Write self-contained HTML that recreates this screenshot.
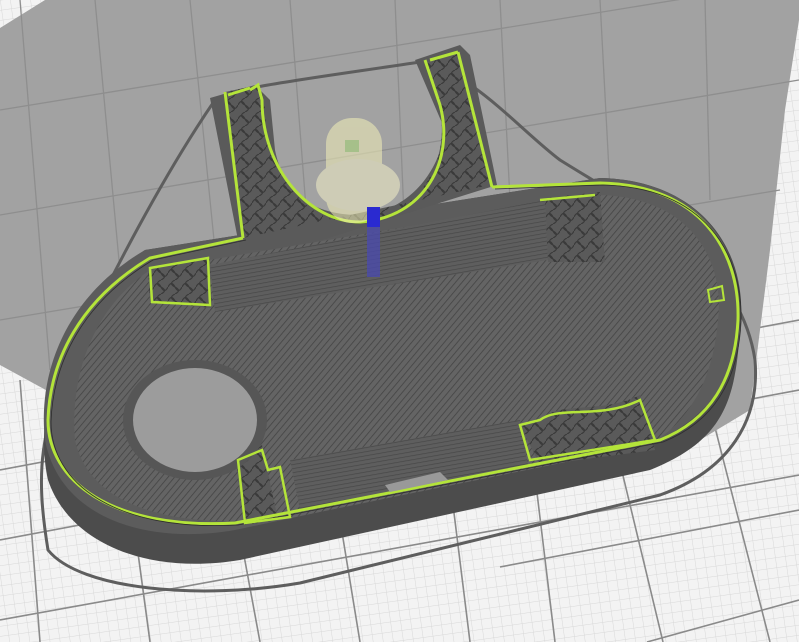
<!DOCTYPE html>
<html><head><style>
html,body{margin:0;padding:0;background:#f2f2f2;overflow:hidden}
svg{display:block}
</style></head><body>
<svg width="799" height="642" viewBox="0 0 799 642" xmlns="http://www.w3.org/2000/svg">
<defs>
<pattern id="minor" width="10" height="10" patternUnits="userSpaceOnUse" patternTransform="rotate(-8)">
<rect width="10" height="10" fill="#f3f3f3"/>
<path d="M0 0H10M0 0V10" stroke="#d8d8d8" stroke-width="1"/>
</pattern>
<pattern id="hatch" width="5" height="5" patternUnits="userSpaceOnUse" patternTransform="rotate(40)">
<rect width="5" height="5" fill="#646464"/>
<path d="M0 0V5" stroke="#444" stroke-width="1.6"/>
</pattern>
<pattern id="hatch2" width="4" height="4" patternUnits="userSpaceOnUse" patternTransform="rotate(-10)">
<rect width="4" height="4" fill="#5e5e5e"/>
<path d="M0 0H4" stroke="#474747" stroke-width="1.4"/>
</pattern>
<pattern id="gyro" width="14" height="14" patternUnits="userSpaceOnUse">
<rect width="14" height="14" fill="#5a5a5a"/>
<path d="M0 7Q3.5 0 7 7T14 7M7 0Q0 3.5 7 7T7 14" stroke="#3a3a3a" fill="none" stroke-width="1.2"/>
</pattern>
</defs>
<rect width="799" height="642" fill="url(#minor)"/>
<g stroke="#8a8a8a" stroke-width="1.6" fill="none">
<path d="M440 400L470 642"/><path d="M527 410L555 642"/><path d="M600 380L663 642"/><path d="M690 330L770 642"/>
<path d="M0 620L799 475"/><path d="M0 540L799 390"/><path d="M500 567L799 510"/><path d="M647 642L799 600"/>
<path d="M0 470L799 320"/>
<path d="M20 380L40 642"/><path d="M120 420L150 642"/><path d="M230 480L260 642"/><path d="M340 520L360 642"/>
</g>
<!-- shadow -->
<path d="M0 28L45 0H799V20L785 110L770 250L750 410L700 440L600 470L300 540L150 520L55 395L0 365Z" fill="#a2a2a2"/>
<g stroke="#8e8e8e" stroke-width="1.3" fill="none">
<path d="M0 110L799 -20"/><path d="M0 215L799 80"/><path d="M0 320L780 190"/>
<path d="M95 0L130 380"/><path d="M190 0L220 300"/><path d="M290 0L310 260"/><path d="M395 0L405 240"/><path d="M500 0L510 200"/><path d="M600 0L610 190"/><path d="M705 0L710 200"/>
<path d="M20 0L50 370"/>
</g>
<!-- skirt -->
<path d="M215 100C230 88 300 80 420 62C470 70 520 130 560 160C640 210 740 260 755 360C760 420 730 470 660 495L300 583C200 600 80 590 48 550C35 470 40 430 75 350C110 280 160 180 215 100Z" fill="none" stroke="#5e5e5e" stroke-width="3"/>
<!-- object body side -->
<path d="M145 250L600 178C700 180 750 250 740 330C735 400 725 440 650 470L240 560C150 575 70 545 48 480C35 420 50 320 145 250Z" fill="#4c4c4c"/>
<path d="M145 250L600 178C700 180 745 250 738 320C732 380 715 410 660 440L235 530C150 545 60 520 45 440C38 380 60 300 145 250Z" fill="#5c5c5c"/>
<!-- fork arms -->
<path d="M210 98L255 85L270 100L275 150C285 200 320 215 360 215C410 212 440 170 445 130L415 60L460 45L470 55L497 185L290 250L240 250Z" fill="#5a5a5a"/>
<path d="M225 92L258 85L265 100C262 160 300 225 355 222C420 220 450 160 440 110L425 60L458 52L490 185L243 238Z" fill="url(#gyro)"/>
<path d="M250 90L258 85 262 100C262 170 310 222 360 222C425 218 455 160 440 105L425 60" fill="none" stroke="#b4e43a" stroke-width="3"/>
<path d="M225 92L243 238M458 52L492 187" stroke="#b4e43a" stroke-width="3"/>
<path d="M228 95L250 88" stroke="#b4e43a" stroke-width="3"/>
<path d="M430 60L458 52" stroke="#b4e43a" stroke-width="3"/>
<!-- inner floor -->
<path d="M150 270L595 195C690 195 725 260 718 320C713 380 690 420 650 445L290 518C180 530 90 510 75 440C70 380 90 310 150 270Z" fill="url(#hatch)"/>
<path d="M210 265L545 200L548 260L215 312Z" fill="url(#hatch2)"/>
<path d="M290 460L520 420L528 465L300 510Z" fill="url(#hatch2)"/>
<path d="M148 268L210 258L212 308L150 302Z" fill="url(#gyro)"/>
<path d="M545 198L600 192L605 262L548 262Z" fill="url(#gyro)"/>
<path d="M520 425L540 420C560 400 600 415 640 395L655 450L540 465Z" fill="url(#gyro)"/>
<path d="M235 455L262 445L278 520L245 525Z" fill="url(#gyro)"/>
<ellipse cx="195" cy="420" rx="72" ry="60" fill="#565656"/>
<ellipse cx="195" cy="420" rx="62" ry="52" fill="#9c9c9c"/>
<path d="M243 238L150 258C80 300 50 360 48 420C48 480 110 530 235 523L660 440C710 420 735 380 738 320C740 250 700 185 600 183L492 187" fill="none" stroke="#b4e43a" stroke-width="3"/>
<path d="M243 238L150 258C80 300 50 360 48 420C48 480 110 530 235 523L660 440C710 420 735 380 738 320C740 250 700 185 600 183L492 187" fill="none" stroke="#2e2e2e" stroke-width="0.8" transform="translate(3,2)"/>
<path d="M150 268L208 258 210 305 152 302Z" fill="none" stroke="#b4e43a" stroke-width="2.5"/>
<path d="M262 450L268 470 280 467 290 517 245 523 238 460Z" fill="none" stroke="#b4e43a" stroke-width="2.5"/>
<path d="M520 425L540 420C560 405 600 420 640 400L655 440 530 460Z" fill="none" stroke="#b4e43a" stroke-width="2.5"/>
<path d="M708 290L722 286 724 300 710 302Z" fill="none" stroke="#b4e43a" stroke-width="2"/>
<path d="M540 200L595 195" stroke="#b4e43a" stroke-width="2.5"/>
<path d="M385 485L440 472L448 480L390 492Z" fill="#999"/>
<g opacity="0.55">
<rect x="326" y="118" width="56" height="105" rx="26" fill="#f2f0b8"/>
<ellipse cx="358" cy="185" rx="42" ry="26" fill="#f2f0c8"/>
</g>
<rect x="345" y="140" width="14" height="12" fill="#a6c08a"/>
<rect x="367" y="207" width="13" height="70" fill="#4a4ab0" opacity="0.75"/>
<rect x="367" y="207" width="13" height="20" fill="#2a2ad0"/>
</svg>
</body></html>
